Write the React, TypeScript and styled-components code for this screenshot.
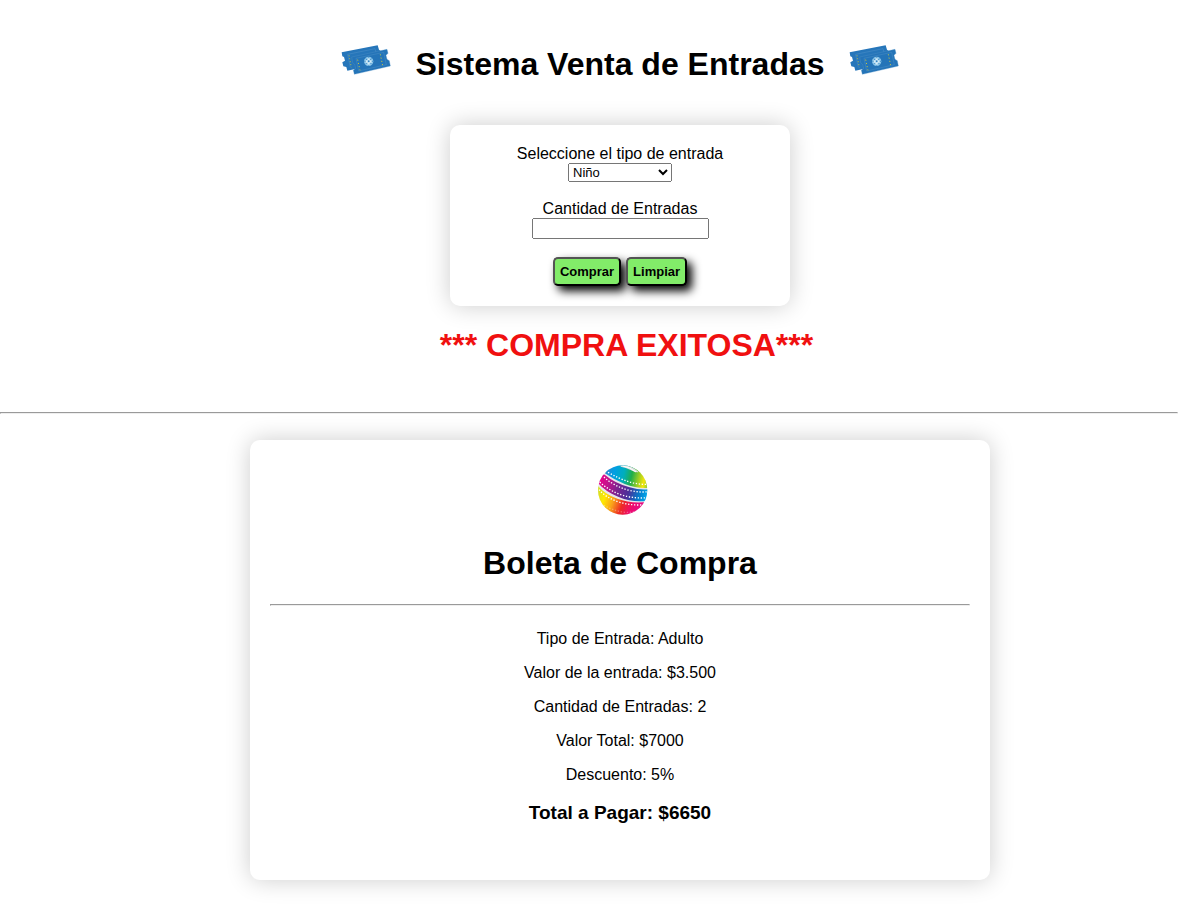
import React, { useState } from "react";
import styled, { createGlobalStyle } from "styled-components";

const GlobalStyle = createGlobalStyle`
  body {
    margin: 0;
    background: #fff;
    color: #000;
    font-family: Arial, "Liberation Sans", sans-serif;
    font-size: 16px;
    line-height: 18px;
  }
`;

const Page = styled.main`
  overflow: hidden;
  padding-bottom: 24px;
`;

const Section = styled.section`
  display: flex;
  flex-direction: column;
  align-items: center;
  padding-left: 62px;
`;

const Header = styled.header`
  display: flex;
  justify-content: center;
  gap: 24px;
  padding: 45px 0 41px;
`;

const Title = styled.h1`
  margin: 0;
  font-size: 32px;
  line-height: 39px;
`;

const TicketSvg = styled.svg`
  width: 50px;
  height: 30px;
`;

const Card = styled.div<{ $width: number }>`
  box-sizing: border-box;
  width: 100%;
  max-width: ${(p) => p.$width}px;
  padding: 20px;
  border-radius: 10px;
  background: #fff;
  box-shadow: 0 0 25px rgba(0, 0, 0, 0.2);
  text-align: center;
`;

const Form = styled.form`
  display: flex;
  flex-direction: column;
  gap: 18px;
`;

const Field = styled.div`
  display: flex;
  flex-direction: column;
  align-items: center;
`;

const TypeSelect = styled.select`
  box-sizing: border-box;
  width: 104px;
  height: 19px;
  font-family: inherit;
  font-size: 13px;
`;

const AmountInput = styled.input`
  box-sizing: border-box;
  width: 177px;
  height: 21px;
  font-family: inherit;
  font-size: 13px;
`;

const Actions = styled.div`
  display: flex;
  justify-content: center;
  gap: 5px;
`;

const Button = styled.button`
  padding: 5px;
  border: 2px outset #000;
  border-radius: 5px;
  background: #82ec69;
  box-shadow: 5px 5px 10px #000;
  color: #000;
  font-family: inherit;
  font-size: 13px;
  font-weight: bold;
  line-height: 15px;
`;

const Message = styled.h2`
  margin: 20px 0 47px;
  padding-left: 13px;
  color: #f01010;
  font-size: 32px;
  line-height: 39px;
`;

const Divider = styled.hr`
  margin: 0;
  border: 1px inset #eee;
`;

const Receipt = styled(Section)`
  padding-top: 26px;
`;

const Logo = styled.svg`
  display: block;
  width: 50px;
  height: 50px;
  margin: 5px auto 29px;
  padding-left: 5px;
`;

const ReceiptTitle = styled(Title)`
  margin-bottom: 21px;
`;

const Details = styled.div`
  display: flex;
  flex-direction: column;
  gap: 16px;
  padding: 24px 0 36px;
`;

const Line = styled.p`
  margin: 0;
`;

const Total = styled.h3`
  margin: 2px 0 0;
  font-size: 19px;
  line-height: 22px;
`;

function Ticket() {
  return (
    <TicketSvg viewBox="33 29 150 90" aria-hidden="true">
      <path
        d="M35 51 L143 30 L147 43 L153 48 L160 82 L52 106 L49 95 L40 93 L37 81 L45 76 L42 65 L37 63Z"
        fill="#2676ba"
      />
      <path d="M53 57 L135 40 L138 51 M53 57 L61 96" fill="none" stroke="#4f91c8" strokeWidth="1.5" />
      <path d="M57 60 L64 96" stroke="#b9bd45" strokeWidth="3" strokeDasharray="3 6" />
      <path
        d="M65 65 L171 42 L174 54 L168 60 L171 72 L178 76 L181 92 L73 117 L70 105 L77 99 L74 87 L68 82Z"
        fill="#2474b8"
        stroke="#5596c9"
        strokeWidth="1"
      />
      <path d="M78 69 L161 51 L169 88 L86 107Z" fill="none" stroke="#4b8fc6" strokeWidth="1.5" />
      <path d="M83 73 L90 105 M151 57 L158 91" stroke="#d6cd35" strokeWidth="3" strokeDasharray="3 7" />
      <circle cx="116" cy="78" r="14" fill="#8bc5e8" />
      <path d="M107 70 L125 86 M125 70 L107 86 M116 66 V91 M103 78 H129" stroke="#2474b8" strokeWidth="2" />
      <path d="M113 69 h6 v6 h6 v7 h-6 v6 h-6 v-6 h-6 v-7 h6Z" fill="#d5edf8" />
      <circle cx="116" cy="78" r="3" fill="#3385c5" />
    </TicketSvg>
  );
}

function Globe() {
  return (
    <Logo viewBox="24 21 150 150" role="img" aria-label="Cine">
      <defs>
        <clipPath id="ball">
          <circle cx="98" cy="96" r="74" />
        </clipPath>
        <linearGradient id="upper" gradientUnits="userSpaceOnUse" x1="45" y1="48" x2="174" y2="76">
          <stop offset="0" stopColor="#2a86d0" />
          <stop offset=".2" stopColor="#009fe3" />
          <stop offset=".42" stopColor="#00aebd" />
          <stop offset=".6" stopColor="#1fae4a" />
          <stop offset=".78" stopColor="#a4d022" />
          <stop offset=".9" stopColor="#f4e60c" />
          <stop offset="1" stopColor="#8fcf3a" />
        </linearGradient>
        <linearGradient id="middle" gradientUnits="userSpaceOnUse" x1="26" y1="66" x2="174" y2="112">
          <stop offset="0" stopColor="#ec008c" />
          <stop offset=".18" stopColor="#c4148c" />
          <stop offset=".4" stopColor="#7a2490" />
          <stop offset=".62" stopColor="#4b3099" />
          <stop offset=".82" stopColor="#0878c9" />
          <stop offset="1" stopColor="#00aeef" />
        </linearGradient>
        <linearGradient id="lower" gradientUnits="userSpaceOnUse" x1="26" y1="100" x2="160" y2="150">
          <stop offset="0" stopColor="#d9e021" />
          <stop offset=".16" stopColor="#ffe800" />
          <stop offset=".36" stopColor="#f9a01b" />
          <stop offset=".56" stopColor="#ee2a24" />
          <stop offset=".78" stopColor="#ed0a72" />
          <stop offset="1" stopColor="#e4108a" />
        </linearGradient>
      </defs>
      <g clipPath="url(#ball)">
        <rect x="24" y="21" width="150" height="150" fill="#e6e6ea" />
        <path d="M45 46 L60 18 H150 L174 60 V90 Q140 92 104 78 Q70 64 45 46Z" fill="url(#upper)" />
        <path d="M92 22 Q122 18 146 42 Q138 45 122 36 Q108 28 92 26Z" fill="#dfe1e2" />
        <path d="M98 24 Q120 27 138 42" fill="none" stroke="#fff" strokeWidth="3" />
        <path d="M34 52 Q38 46 44 50 Q74 75 119 88 Q150 97 175 94 L174 128 Q130 135 86 117 Q46 101 24 75Z" fill="url(#middle)" />
        <path d="M24 84 Q46 110 82 122 Q125 138 174 131 V174 H24Z" fill="url(#lower)" />
        <g fill="none" stroke="#fff" strokeWidth="4" strokeDasharray="4 5">
          <path d="M54 43 Q87 62 116 71 Q144 80 172 79" />
          <path d="M42 57 Q72 86 122 98 Q150 104 174 101" />
          <path d="M29 72 Q56 97 90 109 Q130 123 172 119" />
          <path d="M27 95 Q48 119 86 132 Q126 144 166 140" />
          <path d="M42 142 Q68 158 105 163 Q128 165 148 156" strokeOpacity=".3" />
        </g>
      </g>
    </Logo>
  );
}

const details = [
  "Tipo de Entrada: Adulto",
  "Valor de la entrada: $3.500",
  "Cantidad de Entradas: 2",
  "Valor Total: $7000",
  "Descuento: 5%",
];

export default function App() {
  const [type, setType] = useState("nino");
  const [amount, setAmount] = useState("");

  return (
    <>
      <GlobalStyle />
      <Page>
        <Section>
          <Header>
            <Ticket />
            <Title>Sistema Venta de Entradas</Title>
            <Ticket />
          </Header>
          <Card $width={340}>
            <Form onSubmit={(e) => e.preventDefault()}>
              <Field>
                <label htmlFor="type">Seleccione el tipo de entrada</label>
                <TypeSelect id="type" value={type} onChange={(e) => setType(e.target.value)}>
                  <option value="nino">Niño</option>
                  <option value="adulto">Adulto</option>
                </TypeSelect>
              </Field>
              <Field>
                <label htmlFor="amount">Cantidad de Entradas</label>
                <AmountInput id="amount" value={amount} onChange={(e) => setAmount(e.target.value)} />
              </Field>
              <Actions>
                <Button type="submit">Comprar</Button>
                <Button type="button" onClick={() => setAmount("")}>Limpiar</Button>
              </Actions>
            </Form>
          </Card>
          <Message>*** COMPRA EXITOSA***</Message>
        </Section>
        <Divider />
        <Receipt>
          <Card $width={740}>
            <Globe />
            <ReceiptTitle as="h2">Boleta de Compra</ReceiptTitle>
            <Divider />
            <Details>
              {details.map((text) => (
                <Line key={text}>{text}</Line>
              ))}
              <Total>Total a Pagar: $6650</Total>
            </Details>
          </Card>
        </Receipt>
      </Page>
    </>
  );
}
